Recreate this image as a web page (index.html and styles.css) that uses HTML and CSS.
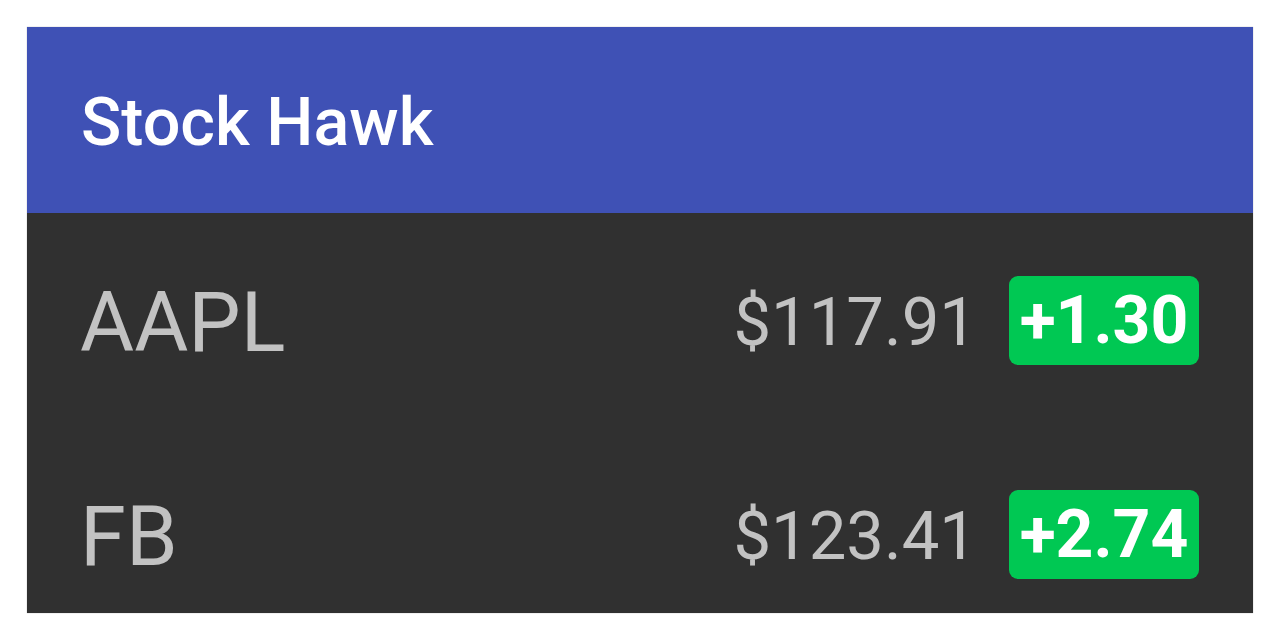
FILE: index.html
```html
<!DOCTYPE html>
<html>
<head>
<meta charset="utf-8">
<link rel="stylesheet" href="styles.css">
</head>
<body>
<div class="card">
  <header class="bar">
    <h1 class="title">Stock Hawk</h1>
  </header>
  <div class="list">
    <div class="row">
      <span class="symbol">AAPL</span>
      <span class="price">$117.91</span>
      <span class="change">+1.30</span>
    </div>
    <div class="row">
      <span class="symbol">FB</span>
      <span class="price">$123.41</span>
      <span class="change">+2.74</span>
    </div>
  </div>
</div>
</body>
</html>
```

FILE: styles.css
```css
html, body {
  margin: 0;
  padding: 0;
  background: #ffffff;
}
body {
  padding: 27px;
  font-family: Roboto, "Liberation Sans", sans-serif;
}
.card {
  width: 1226px;
  height: 586px;
  overflow: hidden;
  background: #303030;
  box-shadow: 0 0 1px rgba(0,0,0,0.35);
}
.bar {
  height: 186px;
  background: #3f51b5;
  display: flex;
  align-items: center;
  padding-left: 54px;
}
.title {
  margin: 0;
  color: #ffffff;
  font-weight: 500;
  font-size: 66.5px;
  line-height: 1;
  position: relative;
  top: 2px;
}
.list {
  display: flex;
  flex-direction: column;
}
.row {
  height: 214px;
  flex: none;
  display: flex;
  align-items: center;
  padding: 0 54px 0 53px;
}
.symbol {
  flex: 1;
  color: #c2c2c2;
  font-size: 83px;
  line-height: 1;
  position: relative;
  top: 2px;
}
.price {
  color: #c2c2c2;
  font-size: 67px;
  line-height: 1;
  margin-right: 32px;
  position: relative;
  top: 2px;
}
.change {
  background: #00c853;
  color: #ffffff;
  font-weight: 700;
  font-size: 66px;
  line-height: 89px;
  height: 89px;
  width: 190px;
  box-sizing: border-box;
  text-align: center;
  border-radius: 9px;
}
```
